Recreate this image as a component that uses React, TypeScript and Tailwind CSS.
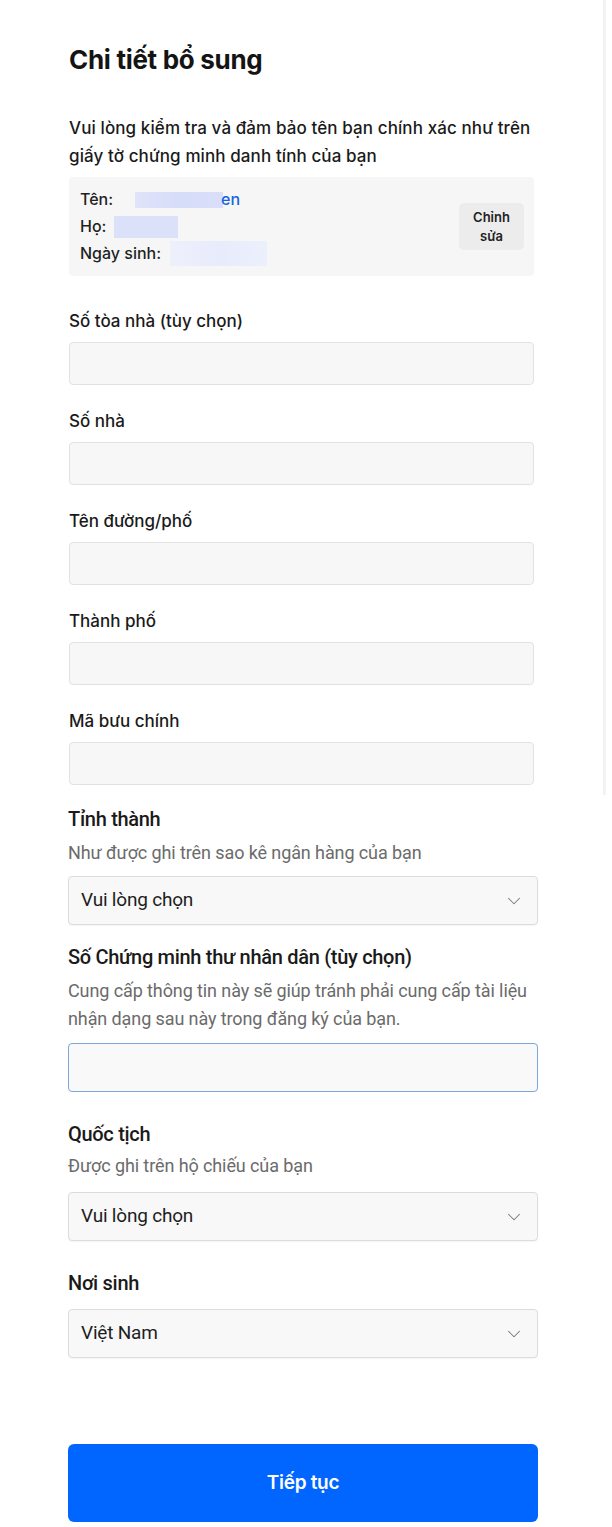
import { ChevronDown } from "lucide-react";

const topFont = { fontFamily: "Inter, 'Noto Sans', sans-serif" };

function TextField({ label }: { label: string }) {
  return (
    <div className="flex flex-col">
      <label className="text-[17px] font-medium leading-6 text-[#1a1a1a]">{label}</label>
      <div className="mt-[9px] h-[43px] rounded-[4px] border border-[#e2e2e2] bg-[#f7f7f7]" />
    </div>
  );
}

function SelectField({ value }: { value: string }) {
  return (
    <div className="flex h-[49px] items-center justify-between rounded-[4px] border border-[#dcdcdc] bg-[#f8f8f8] pl-[12px] pr-[12px] shadow-[0_1px_1px_rgba(0,0,0,0.04)]">
      <span className="text-[19px] text-[#1e1e1e] tracking-[-0.2px]">{value}</span>
      <ChevronDown className="h-[22px] w-[22px] text-[#777]" strokeWidth={1.1} />
    </div>
  );
}

export default function App() {
  return (
    <div className="relative min-h-[1527px] w-full bg-white">
      {/* faint scrollbar track on the right */}
      <div className="absolute right-[6px] top-0 h-[795px] w-[3px] bg-[#f3f3f3]" />

      <div className="px-[69px] pt-[40px]" style={topFont}>
        <h1 className="text-[26px] font-bold leading-[40px] tracking-[-0.3px] text-[#141414]">Chi tiết bổ sung</h1>

        <p className="mt-[34px] w-[465px] text-[17px] font-medium leading-[28px] tracking-[0.1px] text-[#1a1a1a]">
          Vui lòng kiểm tra và đảm bảo tên bạn chính xác như trên giấy tờ chứng minh danh tính của bạn
        </p>

        <div className="mt-[7px] flex w-[465px] items-center justify-between rounded-[4px] bg-[#f6f6f6] py-[9px] pl-[11px] pr-[10px]">
          <div className="flex flex-col text-[16px] font-medium leading-[27px] text-[#1f1f1f]">
            <div className="flex items-center">
              <span>Tên:</span>
              <span className="ml-[22px] h-[16px] w-[88px] bg-gradient-to-r from-[#dfe4fa] via-[#d6ddf9] to-[#d9dff9]" />
              <span className="-ml-[2px] text-[#1565e0]">en</span>
            </div>
            <div className="flex items-center">
              <span>Họ:</span>
              <span className="ml-[8px] h-[22px] w-[64px] bg-[#dbe1f9]" />
            </div>
            <div className="flex items-center">
              <span>Ngày sinh:</span>
              <span className="ml-[9px] h-[25px] w-[97px] bg-gradient-to-r from-[#eef0fc] via-[#e8ebfb] to-[#eceffc]" />
            </div>
          </div>
          <div className="flex h-[47px] w-[65px] items-center justify-center rounded-[5px] bg-[#ececec] text-center text-[13px] font-semibold leading-[19px] text-[#222]">
            Chỉnh<br />sửa
          </div>
        </div>

        <div className="mt-[33px] flex w-[465px] flex-col gap-[24px]">
          <TextField label="Số tòa nhà (tùy chọn)" />
          <TextField label="Số nhà" />
          <TextField label="Tên đường/phố" />
          <TextField label="Thành phố" />
          <TextField label="Mã bưu chính" />
        </div>
      </div>

      <div className="ml-[68px] w-[470px] pb-[6px]" style={{ fontFamily: "Roboto, 'Noto Sans', sans-serif" }}>
        <div className="mt-[20px]">
          <div className="text-[20px] font-medium leading-[28px] tracking-[-0.3px] text-[#1a1a1a]">Tỉnh thành</div>
          <div className="mt-[6px] text-[18px] leading-[28px] tracking-[-0.1px] text-[#6b6b6b]">Như được ghi trên sao kê ngân hàng của bạn</div>
          <div className="mt-[9px]">
            <SelectField value="Vui lòng chọn" />
          </div>
        </div>

        <div className="mt-[18px]">
          <div className="text-[20px] font-medium leading-[28px] tracking-[-0.3px] text-[#1a1a1a]">Số Chứng minh thư nhân dân (tùy chọn)</div>
          <div className="mt-[6px] text-[18px] leading-[28px] tracking-[-0.1px] text-[#6b6b6b]">
            Cung cấp thông tin này sẽ giúp tránh phải cung cấp tài liệu nhận dạng sau này trong đăng ký của bạn.
          </div>
          <div className="mt-[10px] h-[49px] rounded-[4px] border border-[#7ea6de] bg-[#f9f9f9]" />
        </div>

        <div className="mt-[28px]">
          <div className="text-[20px] font-medium leading-[28px] tracking-[-0.3px] text-[#1a1a1a]">Quốc tịch</div>
          <div className="mt-[4px] text-[18px] leading-[28px] tracking-[-0.1px] text-[#6b6b6b]">Được ghi trên hộ chiếu của bạn</div>
          <div className="mt-[12px]">
            <SelectField value="Vui lòng chọn" />
          </div>
        </div>

        <div className="mt-[28px]">
          <div className="text-[20px] font-medium leading-[28px] tracking-[-0.3px] text-[#1a1a1a]">Nơi sinh</div>
          <div className="mt-[12px]">
            <SelectField value="Việt Nam" />
          </div>
        </div>

        <button
          type="button"
          className="mt-[86px] flex h-[78px] w-full items-center justify-center rounded-[6px] bg-[#0066ff] text-[19px] font-semibold tracking-[-0.3px] text-white"
          style={topFont}
        >
          Tiếp tục
        </button>
      </div>
    </div>
  );
}
